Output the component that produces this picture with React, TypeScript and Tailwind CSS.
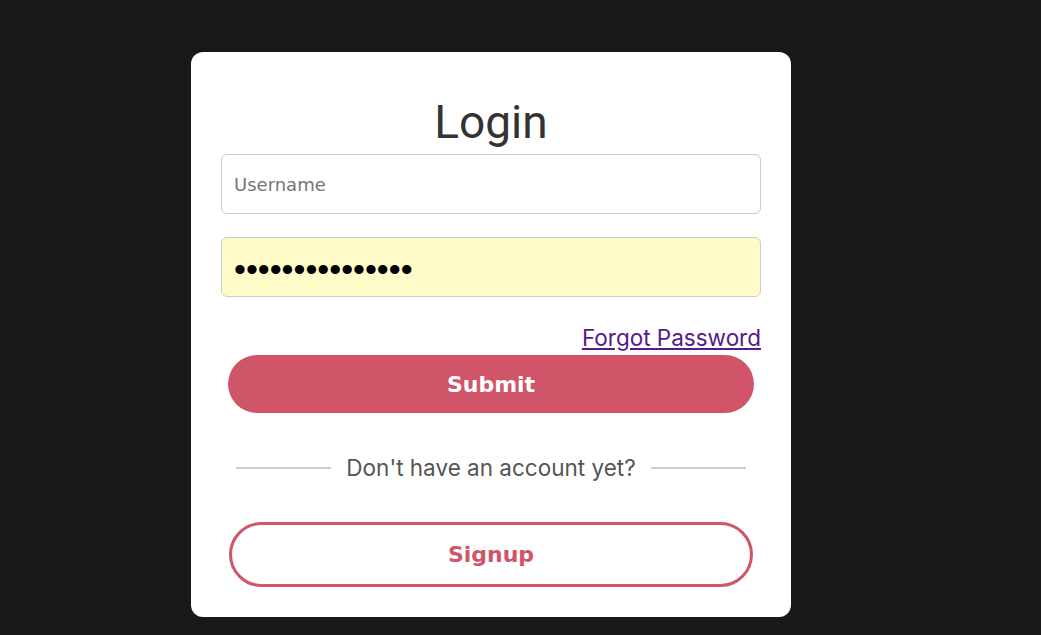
import { useState } from "react";

export default function App() {
  const [username, setUsername] = useState("");
  const [password, setPassword] = useState("sosecretpass123");

  return (
    <div className="min-h-screen bg-[#181818] pt-[52px] pl-[191px]">
      <div className="w-[600px] h-[565px] bg-white rounded-xl px-[30px] pt-[38px]">
        <h1 className="text-center text-[46px] leading-[64px] text-[#333333] font-['Roboto',sans-serif]">
          Login
        </h1>
        <form onSubmit={(e) => e.preventDefault()} className="flex flex-col">
          <input
            type="text"
            placeholder="Username"
            value={username}
            onChange={(e) => setUsername(e.target.value)}
            className="w-full h-[60px] border border-[#cccccc] rounded-md px-3 text-[18px] font-['DejaVu_Sans',sans-serif] text-[#333] placeholder:text-[#757575] outline-none"
          />
          <input
            type="password"
            value={password}
            onChange={(e) => setPassword(e.target.value)}
            className="mt-[23px] w-full h-[60px] border border-[#cccccc] rounded-md px-3 pt-[5px] text-[34px] bg-[#fffbc8] text-black font-['Liberation_Sans',sans-serif] outline-none"
          />
          <div className="flex justify-end mt-[28px]">
            <a
              href="#"
              className="text-[22.5px] leading-[26px] text-[#551a8b] underline font-['Inter',sans-serif]"
            >
              Forgot Password
            </a>
          </div>
          <button
            type="submit"
            className="mx-[7px] mt-[4px] h-[58px] rounded-full bg-[#d05569] text-white text-[22px] font-bold font-['DejaVu_Sans',sans-serif]"
          >
            Submit
          </button>
          <div className="flex items-center mx-[15px] mt-[38px]">
            <div className="flex-1 h-[2px] bg-[#cccccc]" />
            <span className="px-[15px] text-[22.5px] text-[#555555] font-['Inter',sans-serif]">
              Don't have an account yet?
            </span>
            <div className="flex-1 h-[2px] bg-[#cccccc]" />
          </div>
          <button
            type="button"
            className="mx-[8px] mt-[37px] h-[65px] rounded-full border-[3px] border-[#d05569] bg-white text-[#d05569] text-[22px] font-bold font-['DejaVu_Sans',sans-serif]"
          >
            Signup
          </button>
        </form>
      </div>
    </div>
  );
}
